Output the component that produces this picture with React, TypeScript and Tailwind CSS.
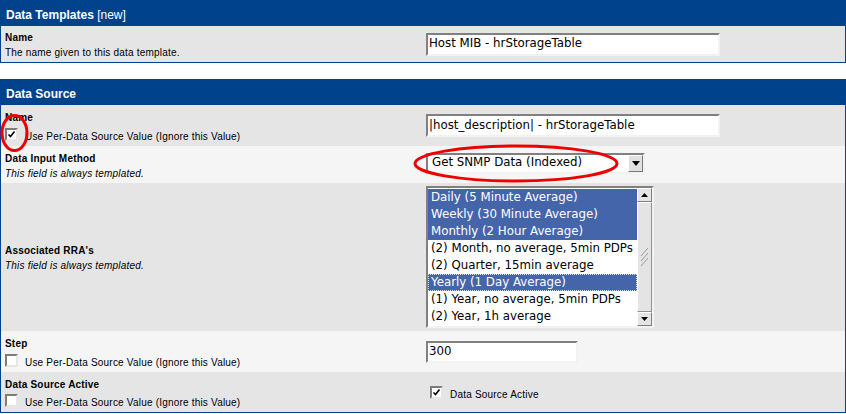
import React from "react";

const label = "font-['Liberation_Sans',Arial,sans-serif] text-[10px] tracking-[0.2px] text-black";
const field = "font-['DejaVu_Sans','Bitstream_Vera_Sans',sans-serif] text-[11.8px] text-black";
const inset =
  "border-2 border-t-[#808080] border-l-[#808080] border-b-[#f2f2f2] border-r-[#f2f2f2] bg-white";

function CheckBox({ checked }: { checked?: boolean }) {
  return (
    <div className="w-[13px] h-[13px] shrink-0 border-2 border-t-[#7c7c7c] border-l-[#7c7c7c] border-b-[#e6e6e6] border-r-[#e6e6e6] bg-white flex items-center justify-center">
      {checked && (
        <svg width="9" height="9" viewBox="0 0 9 9">
          <path d="M1.5 4.5 L3.5 6.5 L7.5 1.5" fill="none" stroke="#000" strokeWidth="1.6" />
        </svg>
      )}
    </div>
  );
}

function PerSource({ checked }: { checked?: boolean }) {
  return (
    <div className="flex items-center h-[18px] pl-[4px]">
      <CheckBox checked={checked} />
      <span className={`${label} ml-[7px] mt-[5px] leading-[12px]`}>
        Use Per-Data Source Value (Ignore this Value)
      </span>
    </div>
  );
}

function Header({ children }: { children: React.ReactNode }) {
  return (
    <div className="h-[25px] bg-[#00438c] pl-[5px] pt-[7px] leading-[15px] text-white text-[12px] font-['Liberation_Sans',Arial,sans-serif]">
      {children}
    </div>
  );
}

function Title({ children }: { children: React.ReactNode }) {
  return <div className={`${label} font-bold leading-[15px]`}>{children}</div>;
}

function TextBox({ value, width }: { value: string; width: string }) {
  return (
    <div className={`${inset} ${width} h-[23px] flex items-center pl-[1px] ${field}`}>
      {value}
    </div>
  );
}

const rras = [
  { name: "Daily (5 Minute Average)", on: true },
  { name: "Weekly (30 Minute Average)", on: true },
  { name: "Monthly (2 Hour Average)", on: true },
  { name: "(2) Month, no average, 5min PDPs", on: false },
  { name: "(2) Quarter, 15min average", on: false },
  { name: "Yearly (1 Day Average)", on: true, focus: true },
  { name: "(1) Year, no average, 5min PDPs", on: false },
  { name: "(2) Year, 1h average", on: false },
];

function ArrowBtn({ up }: { up?: boolean }) {
  return (
    <div className="h-[14px] bg-[#e4e4e4] border border-t-white border-l-white border-b-[#808080] border-r-[#808080] flex items-center justify-center">
      <svg width="7" height="4" viewBox="0 0 7 4">
        <path d={up ? "M0 4 L3.5 0 L7 4 Z" : "M0 0 L3.5 4 L7 0 Z"} fill="#000" />
      </svg>
    </div>
  );
}

export default function App() {
  return (
    <div className="relative w-[846px] h-[414px] bg-white overflow-hidden">
      {/* Data Templates */}
      <div className="border border-[#00438c]">
        <Header>
          <span className="font-bold">Data Templates</span> [new]
        </Header>
        <div className="flex bg-[#e5e5e5] h-[36px]">
          <div className="w-[422px] pl-[4px] pt-[2px] flex flex-col justify-center">
            <Title>Name</Title>
            <div className={`${label} leading-[15px]`}>The name given to this data template.</div>
          </div>
          <div className="flex-1 pl-[3px] flex items-center">
            <TextBox value="Host MIB - hrStorageTable" width="w-[294px]" />
          </div>
        </div>
      </div>

      {/* Data Source */}
      <div className="mt-[16px] border border-[#00438c]">
        <Header>
          <span className="font-bold">Data Source</span>
        </Header>

        <div className="flex bg-[#e5e5e5] h-[41px]">
          <div className="w-[422px] pt-[2px] flex flex-col justify-center">
            <div className="pl-[4px]">
              <Title>Name</Title>
            </div>
            <PerSource checked />
          </div>
          <div className="flex-1 pl-[3px] flex items-center">
            <TextBox value="|host_description| - hrStorageTable" width="w-[294px]" />
          </div>
        </div>

        <div className="flex bg-[#f5f5f5] h-[37px]">
          <div className="w-[422px] pl-[4px] pt-[2px] flex flex-col justify-center">
            <Title>Data Input Method</Title>
            <div className={`${label} italic leading-[15px]`}>This field is always templated.</div>
          </div>
          <div className="flex-1 pl-[3px] flex items-center">
            <div className={`${inset} w-[219px] h-[21px] flex items-center mb-[3px] ${field}`}>
              <span className="flex-1 pl-[4px]">Get SNMP Data (Indexed)</span>
              <div className="w-[15px] h-[17px] bg-[#e0e0e0] border border-t-white border-l-white border-b-[#7a7a7a] border-r-[#7a7a7a] flex items-center justify-center">
                <svg width="8" height="5" viewBox="0 0 8 5">
                  <path d="M0 0 L4 5 L8 0 Z" fill="#000" />
                </svg>
              </div>
            </div>
          </div>
        </div>

        <div className="flex bg-[#e5e5e5] h-[148px]">
          <div className="w-[422px] pl-[4px] pt-[2px] flex flex-col justify-center">
            <Title>Associated RRA's</Title>
            <div className={`${label} italic leading-[15px]`}>This field is always templated.</div>
          </div>
          <div className="flex-1 pl-[3px] flex items-center">
            <div className={`${inset} w-[228px] h-[142px] flex`}>
              <div className="flex-1 pt-[1px]">
                {rras.map((r) => (
                  <div
                    key={r.name}
                    className={`h-[17px] leading-[17px] pl-[3px] whitespace-nowrap ${field} ${
                      r.on ? "bg-[#4565ab] text-white" : ""
                    } ${r.focus ? "outline-1 outline-dotted outline-offset-[-1px] outline-[#d8def0]" : ""}`}
                  >
                    {r.name}
                  </div>
                ))}
              </div>
              <div className="w-[15px] bg-[#e6e6e6] flex flex-col">
                <ArrowBtn up />
                <div className="flex-1 bg-[#e4e4e4] border border-t-white border-l-white border-b-[#909090] border-r-[#909090] flex items-center justify-center">
                  <svg width="9" height="20" viewBox="0 0 9 20">
                    <path d="M1 9 L8 1 M1 14 L8 6 M1 19 L8 11" stroke="#9a9a9a" strokeWidth="1" />
                  </svg>
                </div>
                <ArrowBtn />
              </div>
            </div>
          </div>
        </div>

        <div className="flex bg-[#f5f5f5] h-[41px]">
          <div className="w-[422px] pt-[2px] flex flex-col justify-center">
            <div className="pl-[4px]">
              <Title>Step</Title>
            </div>
            <PerSource />
          </div>
          <div className="flex-1 pl-[3px] flex items-center">
            <div className={`${inset} w-[152px] h-[22px] flex items-center pl-[1px] ${field}`}>300</div>
          </div>
        </div>

        <div className="flex bg-[#e5e5e5] h-[40px]">
          <div className="w-[422px] pt-[2px] flex flex-col justify-center">
            <div className="pl-[4px]">
              <Title>Data Source Active</Title>
            </div>
            <PerSource />
          </div>
          <div className="flex-1 pl-[3px] flex items-center">
            <div className="flex items-center pl-[4px]">
              <CheckBox checked />
              <span className={`${label} ml-[7px] mt-[5px] leading-[12px]`}>Data Source Active</span>
            </div>
          </div>
        </div>
      </div>

      {/* red annotation marks */}
      <svg className="absolute left-0 top-0 pointer-events-none" width="846" height="414">
        <ellipse cx="14.5" cy="133" rx="12.5" ry="17.5" fill="none" stroke="#ee0000" strokeWidth="3" />
        <ellipse cx="516" cy="163.5" rx="101" ry="17.5" fill="none" stroke="#ee0000" strokeWidth="3" />
      </svg>
    </div>
  );
}
